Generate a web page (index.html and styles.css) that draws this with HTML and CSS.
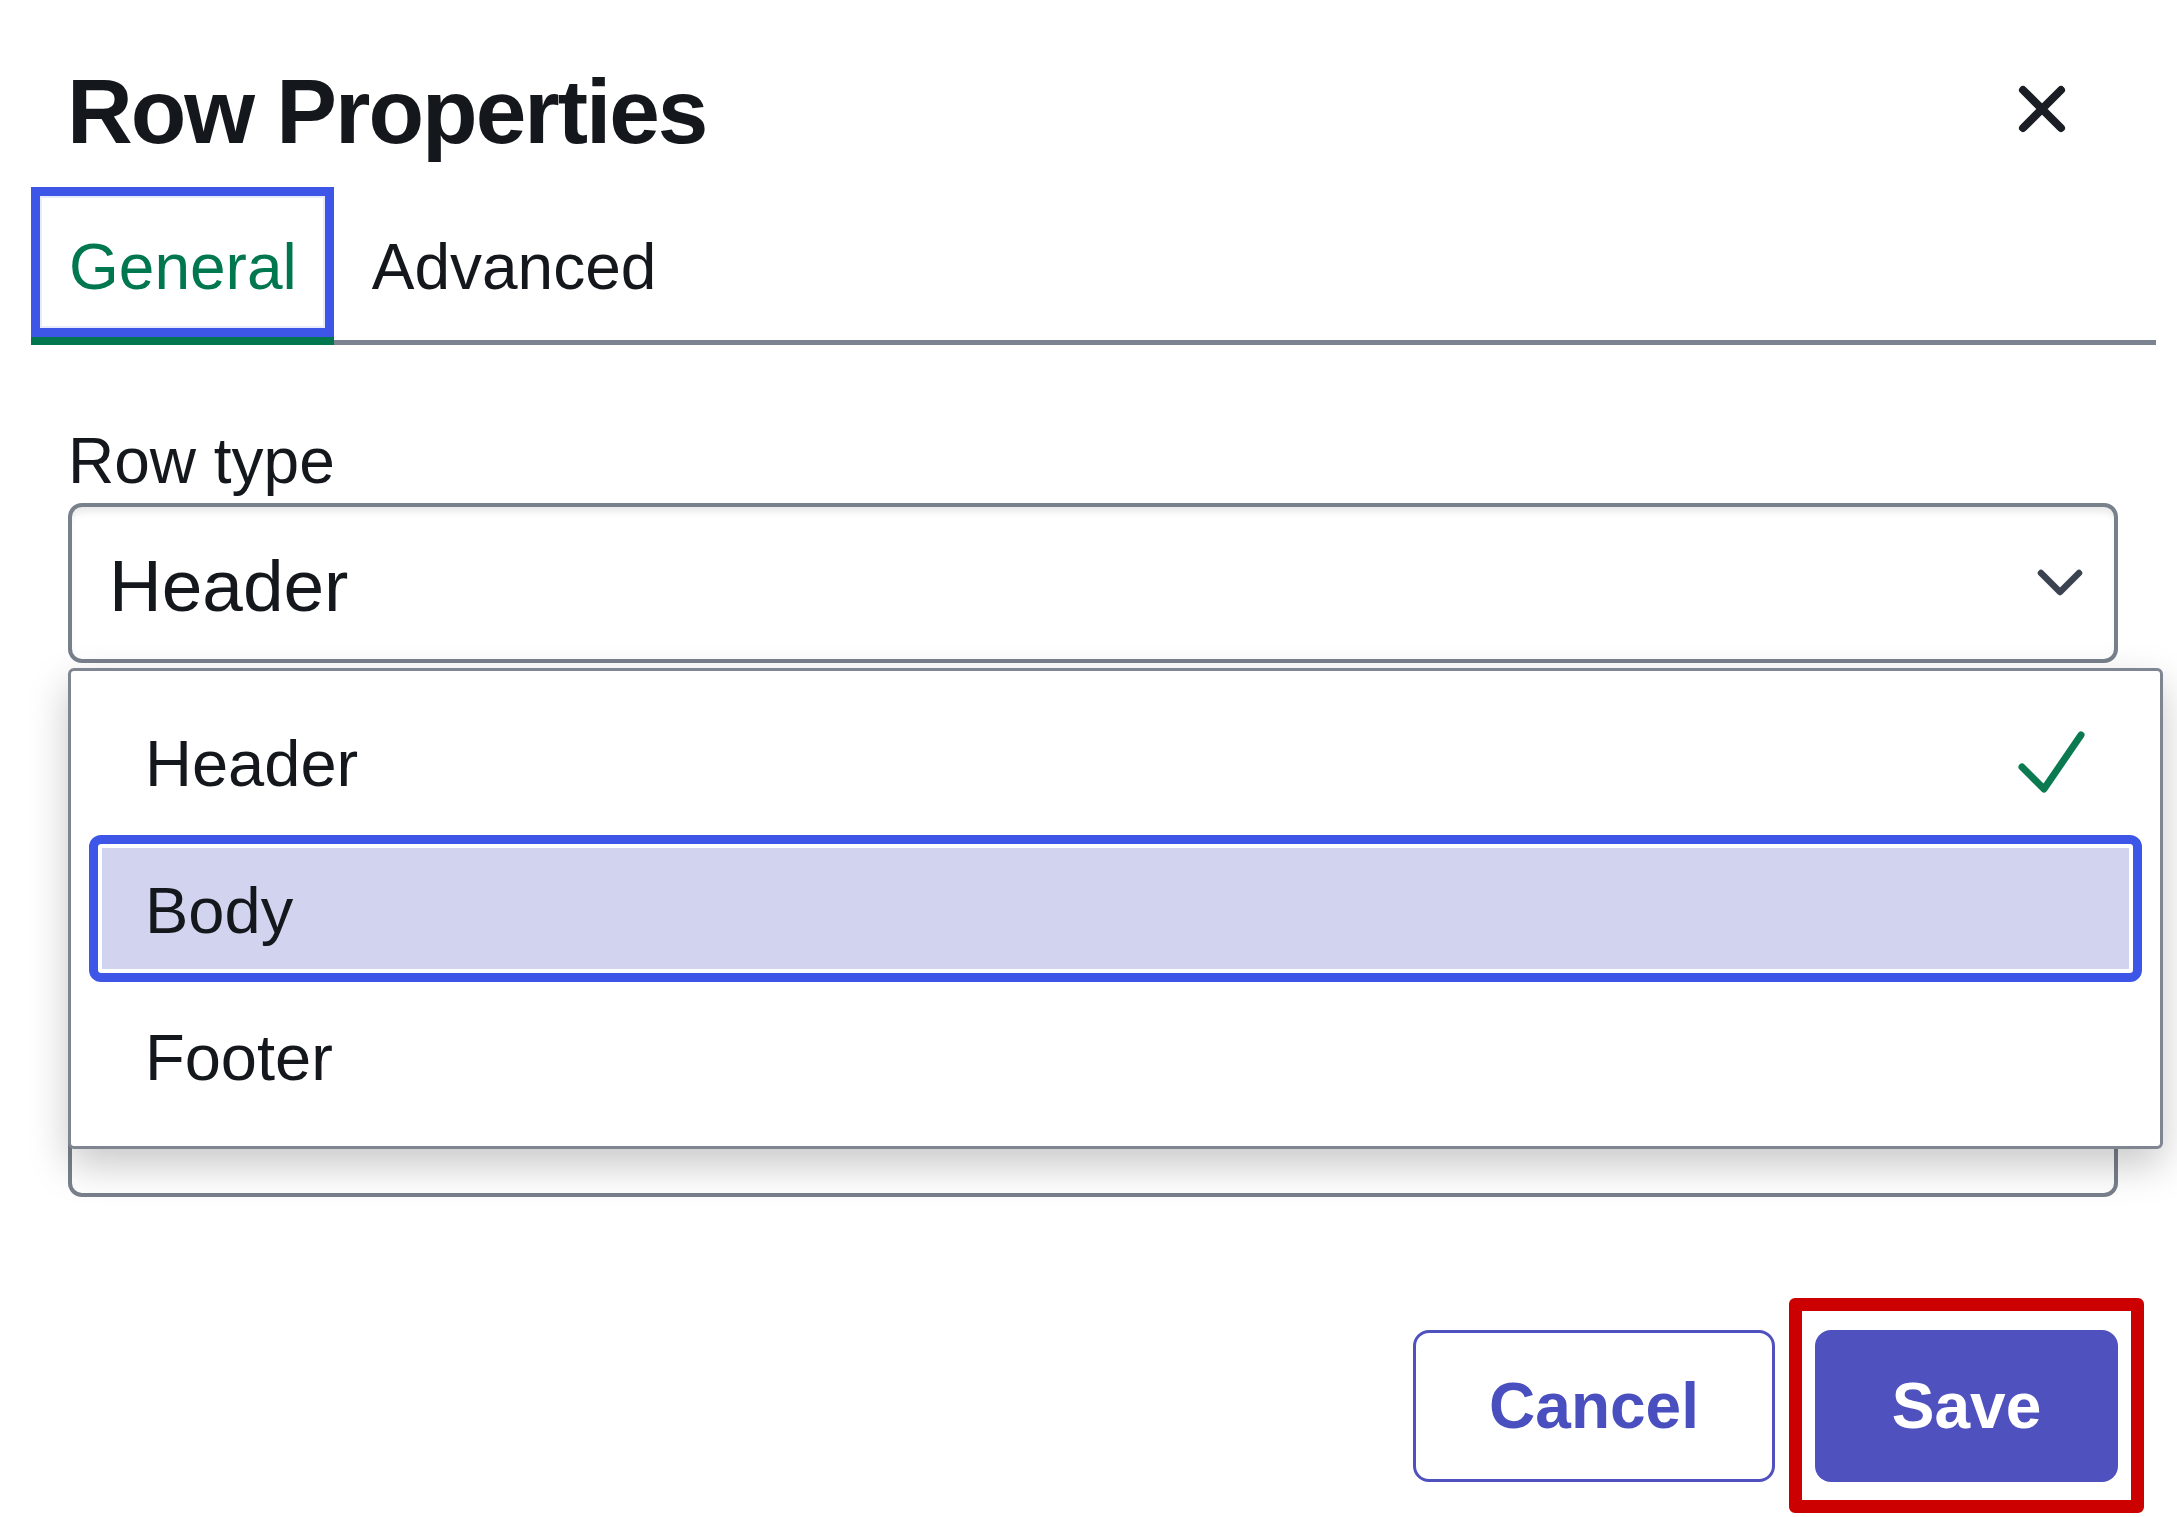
FILE: index.html
```html
<!DOCTYPE html>
<html lang="en">
<head>
<meta charset="utf-8">
<title>Row Properties</title>
<link rel="stylesheet" href="styles.css">
</head>
<body>
<div class="dialog">
  <header class="dialog-header">
    <h1 class="title">Row Properties</h1>
    <button class="close" aria-label="Close">
      <svg width="50" height="50" viewBox="0 0 50 50"><path d="M6 6 L44 44 M44 6 L6 44" stroke="#1a1d24" stroke-width="8" stroke-linecap="round" fill="none"/></svg>
    </button>
  </header>
  <div class="tabs" role="tablist">
    <div class="tab tab-active" role="tab">General</div>
    <div class="tab tab-adv" role="tab">Advanced</div>
  </div>
  <div class="panel">
    <label class="label">Row type</label>
    <div class="field">
      <div class="select">
        <span>Header</span>
        <svg class="chevron" width="46" height="28" viewBox="0 0 46 28"><polyline points="4,4 23,23 42,4" stroke="#3b4350" stroke-width="6.5" stroke-linecap="round" stroke-linejoin="round" fill="none"/></svg>
      </div>
      <div class="next-field"></div>
      <div class="listbox" role="listbox">
        <div class="option" role="option"><span>Header</span>
          <svg width="70" height="66" viewBox="0 0 70 66"><polyline points="6,38 28,60 65,6" stroke="#0b7a50" stroke-width="7" stroke-linecap="round" stroke-linejoin="round" fill="none"/></svg>
        </div>
        <div class="option option-active" role="option"><span>Body</span></div>
        <div class="option" role="option"><span>Footer</span></div>
      </div>
    </div>
  </div>
  <div class="actions">
    <button class="btn btn-secondary">Cancel</button>
    <div class="highlight"><button class="btn btn-primary">Save</button></div>
  </div>
</div>
</body>
</html>
```
FILE: styles.css
```css
body {
  margin: 0;
  background: #fff;
  font-family: "Liberation Sans", Arial, sans-serif;
  color: #14171c;
}

.dialog {
  width: 2177px;
  height: 1517px;
  box-sizing: border-box;
  overflow: hidden;
}

.dialog-header {
  display: flex;
  justify-content: space-between;
  align-items: center;
  height: 100px;
  margin: 62px 110px 0 67px;
}

.title {
  margin: 0;
  font-size: 91px;
  line-height: 100px;
  font-weight: 700;
  letter-spacing: -2px;
}

.close {
  width: 50px;
  height: 50px;
  padding: 0;
  border: 0;
  background: none;
  display: block;
  margin-top: -6px;
}

.close svg { display: block; }

.tabs {
  display: flex;
  height: 153px;
  margin: 25px 21px 0 31px;
  border-bottom: 5px solid #7b8390;
}

.tab {
  box-sizing: border-box;
  height: 158px;
  margin-bottom: -5px;
  padding: 48px 37px 0 38px;
  font-size: 64px;
  line-height: 64px;
  border-bottom: 8px solid transparent;
  color: #14171c;
}

.tab-adv {
  padding-left: 38px;
}

.tab-active {
  color: #00774f;
  border-bottom-color: #00774f;
  box-shadow: inset 0 0 0 9px #3d56e8, inset 0 0 0 11px #e8ebfb;
}

.label {
  display: block;
  font-size: 64px;
  line-height: 64px;
  margin: 84px 0 10px 68px;
}

.field {
  position: relative;
  margin: 0 59px 0 68px;
}

.select {
  box-sizing: border-box;
  height: 160px;
  border: 4px solid #78808c;
  border-radius: 14px;
  display: flex;
  align-items: center;
  justify-content: space-between;
  padding: 5px 31px 0 37px;
  font-size: 73px;
  line-height: 73px;
  box-shadow: inset 0 8px 7px -3px rgba(0, 0, 0, 0.09);
}

.chevron {
  display: block;
  margin-top: -5px;
}

.next-field {
  box-sizing: border-box;
  height: 517px;
  margin-top: 17px;
  border: 4px solid #78808c;
  border-radius: 14px;
}

.listbox {
  position: absolute;
  left: 0;
  top: 165px;
  width: 2095px;
  height: 481px;
  box-sizing: border-box;
  border: 3px solid #7f8692;
  border-radius: 6px;
  background: #fff;
  padding: 17px 18px;
  box-shadow: 0 16px 40px rgba(0, 0, 0, 0.22);
}

.option {
  box-sizing: border-box;
  height: 147px;
  display: flex;
  align-items: center;
  justify-content: space-between;
  padding: 4px 56px 0 56px;
  font-size: 65px;
  line-height: 65px;
}

.option svg { display: block; margin-top: -4px; }

.option-active {
  background: #d1d3ef;
  border: 9px solid #3d56e8;
  border-radius: 12px;
  box-shadow: inset 0 0 0 4px #fff;
  padding-left: 47px;
}

.actions {
  display: flex;
  justify-content: flex-end;
  align-items: center;
  gap: 14px;
  margin: 101px 33px 0 0;
}

.highlight {
  display: flex;
  border: 13px solid #cc0000;
  border-radius: 6px;
  padding: 19px 13px 18px 13px;
}

.btn {
  box-sizing: border-box;
  height: 152px;
  border-radius: 16px;
  font-family: "Liberation Sans", Arial, sans-serif;
  font-size: 64px;
  font-weight: 700;
  padding: 0;
}

.btn-secondary {
  width: 362px;
  background: #fff;
  border: 3px solid #4f51bf;
  color: #4a4fbf;
}

.btn-primary {
  width: 303px;
  background: #4f51bf;
  border: 0;
  color: #fff;
}
```
